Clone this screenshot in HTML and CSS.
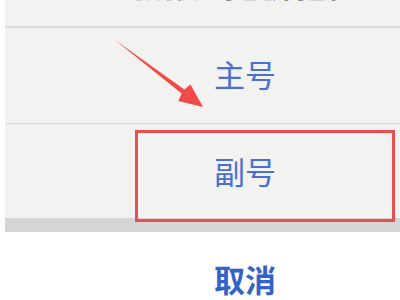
FILE: index.html
```html
<!DOCTYPE html>
<html>
<head>
	<meta charset="utf-8" />
	<title>选择账号</title>
	<link rel="stylesheet" href="styles.css">
</head>
<body>
	<div class="screen">
		<!-- action sheet -->
		<div class="sheet">
			<div class="title">选择使用主号还是副号登录？</div>
			<div class="option">主号</div>
			<div class="option picked">
				副号
				<div class="mark"></div>
			</div>
			<div class="gap"></div>
		</div>
		<div class="cancel">取消</div>

		<!-- annotation arrow -->
		<svg class="arrow" width="400" height="300" viewBox="0 0 400 300">
			<polygon points="115,40 184.4,89.6 190.5,84.4 203,107 178.3,100.9 181.6,93.4" fill="#f04a4a" />
		</svg>
	</div>
</body>
</html>
```

FILE: styles.css
```css
html, body {
	margin: 0px;
	padding: 0px;
	background: #ffffff;
	overflow: hidden;
	font-family: "Noto Sans CJK SC", "Noto Sans", sans-serif;
}
.screen { position: relative; width: 400px; height: 300px; overflow: hidden; }
.sheet { margin-left: 5px; width: 480px; background: #f2f2f0; }
.title {
	box-sizing: border-box;
	height: 61px;
	margin-top: -33px;
	padding-top: 12px;
	border-bottom: 2px solid #dcdcda;
	text-align: center;
	font-size: 18px;
	line-height: 24px;
	color: #8a8a8a;
}
.option {
	box-sizing: border-box;
	height: 96px;
	border-bottom: 1px solid #d6d6d4;
	text-align: center;
	font-size: 31px;
	line-height: 92px;
	color: #4a6fd4;
}
.option.picked { position: relative; height: 94px; border-bottom: 0; line-height: 94px; }
.option .mark {
	position: absolute;
	left: 130px;
	top: 6px;
	width: 260px;
	height: 92px;
	box-sizing: border-box;
	border: 3px solid #e8504f;
	z-index: 2;
}
.gap { height: 14px; background: #d5d5d5; }
.cancel {
	width: 490px;
	padding-top: 27px;
	text-align: center;
	font-size: 31px;
	line-height: 40px;
	font-weight: bold;
	color: #3562c8;
}
.arrow { position: absolute; left: 0; top: 0; pointer-events: none; }
```
